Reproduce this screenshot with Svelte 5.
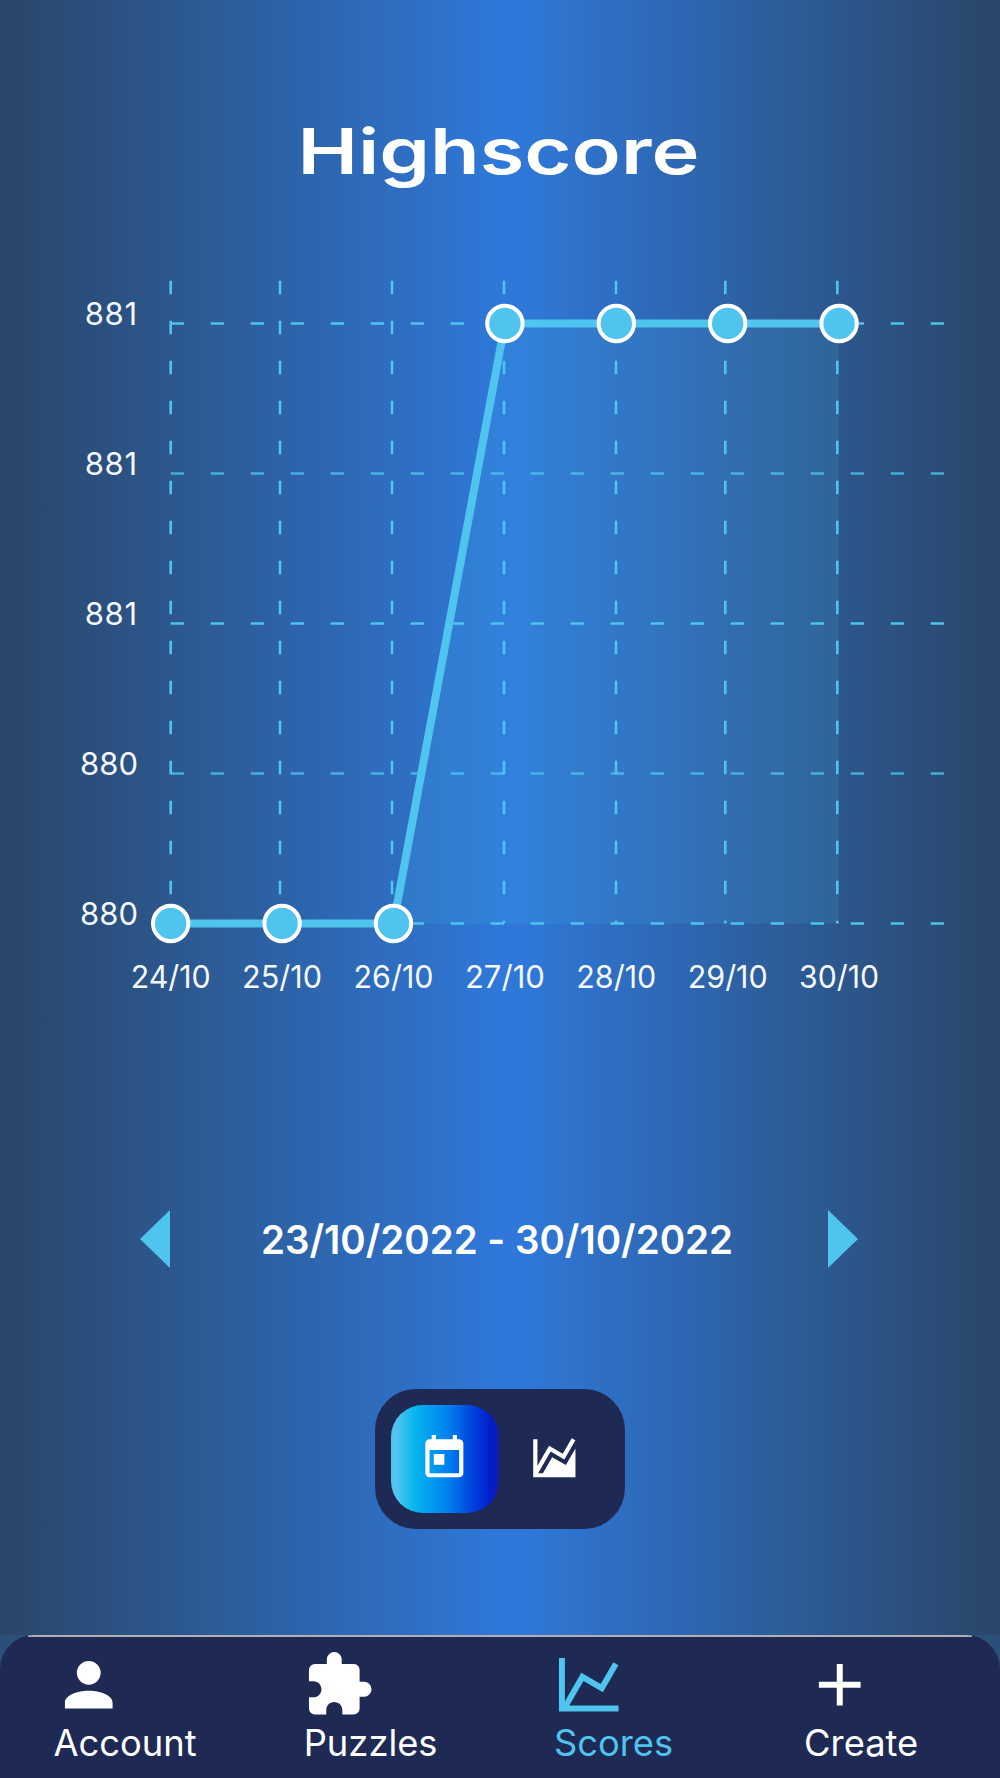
<script>
	const scores = [
		{ day: "24/10", score: 880 },
		{ day: "25/10", score: 880 },
		{ day: "26/10", score: 880 },
		{ day: "27/10", score: 881 },
		{ day: "28/10", score: 881 },
		{ day: "29/10", score: 881 },
		{ day: "30/10", score: 881 }
	];

	const tabs = [
		{
			name: "Account",
			icon: "M12,4A4,4 0 0,1 16,8A4,4 0 0,1 12,12A4,4 0 0,1 8,8A4,4 0 0,1 12,4M12,14C16.42,14 20,15.79 20,18V20H4V18C4,15.79 7.58,14 12,14Z"
		},
		{
			name: "Puzzles",
			icon: "M20.5,11H19V7C19,5.89 18.1,5 17,5H13V3.5A2.5,2.5 0 0,0 10.5,1A2.5,2.5 0 0,0 8,3.5V5H4A2,2 0 0,0 2,7V10.8H3.5C5,10.8 6.2,12 6.2,13.5C6.2,15 5,16.2 3.5,16.2H2V20A2,2 0 0,0 4,22H7.8V20.5C7.8,19 9,17.8 10.5,17.8C12,17.8 13.2,19 13.2,20.5V22H17A2,2 0 0,0 19,20V16H20.5A2.5,2.5 0 0,0 23,13.5A2.5,2.5 0 0,0 20.5,11Z"
		},
		{
			name: "Scores",
			icon: "M16,11.78L20.24,4.45L21.97,5.45L16.74,14.5L10.23,10.75L5.46,19H22V21H2V3H4V17.54L9.5,8L16,11.78Z"
		},
		{ name: "Create", icon: "M19,13H13V19H11V13H5V11H11V5H13V11H19V13Z" }
	];

	const views = [
		{
			name: "week",
			icon: "M7,10H12V15H7M19,19H5V8H19M19,3H18V1H16V3H8V1H6V3H5C3.89,3 3,3.9 3,5V19A2,2 0 0,0 5,21H19A2,2 0 0,0 21,19V5A2,2 0 0,0 19,3Z"
		},
		{
			name: "all",
			icon: "M17.45,15.18L22,7.31V19L22,21H2V3H4V15.54L9.5,6L16,9.78L20.24,2.45L21.97,3.45L16.74,12.5L10.23,8.75L4.31,19H6.57L10.96,11.44L17.45,15.18Z"
		}
	];

	// chart geometry
	const left = 170.7;
	const right = 944;
	const top = 73.5;
	const bottom = 673.5;
	const step = 111.4;
	const gridX = [170.7, 280, 392, 504, 616, 725.3, 837.3];
	const rows = [881, 881, 881, 880, 880];

	let activeTab = $state("Scores");
	let activeView = $state("week");

	const points = scores.map((s, i) => ({
		day: s.day,
		x: left + i * step,
		y: bottom - (s.score - 880) * (bottom - top)
	}));
	const line = points.map((p) => `${p.x},${p.y}`).join(" ");
	const area = `${left},${bottom} ${line} ${points[points.length - 1].x},${bottom}`;
</script>

<div class="screen">
	<h1>
		<svg width="1000" height="250">
			<text x="297.5" y="174.3" textLength="402" lengthAdjust="spacingAndGlyphs">Highscore</text>
		</svg>
	</h1>

	<svg class="chart" width="1000" height="770">
		<polygon class="area" points={area} />
		{#each rows as label, i}
			<line class="grid" x1={left} x2={right} y1={top + i * 150} y2={top + i * 150} class:soft={i === 1 || i === 3} />
			<text class:wide={label === 881} x="138" y={74.5 + i * 150} text-anchor="end">{label}</text>
		{/each}
		{#each gridX as x}
			<line class="grid" x1={x} x2={x} y1="30.8" y2={bottom} />
		{/each}
		<polyline class="line" points={line} />
		{#each points as p}
			<circle cx={p.x} cy={p.y} r="17.7" />
			<text x={p.x} y="738" textLength="80" lengthAdjust="spacingAndGlyphs" text-anchor="middle">{p.day}</text>
		{/each}
	</svg>

	<div class="period">
		<button aria-label="Previous week">
			<svg width="30" height="58"><path d="M30 0V58L0 29Z" /></svg>
		</button>
		<svg width="500" height="80">
			<text x="12" y="55.3" textLength="472" lengthAdjust="spacingAndGlyphs">23/10/2022 - 30/10/2022</text>
		</svg>
		<button aria-label="Next week">
			<svg width="30" height="58"><path d="M0 0V58L30 29Z" /></svg>
		</button>
	</div>

	<div class="toggle">
		{#each views as view}
			<button class:active={activeView === view.name} aria-label={view.name} onclick={() => (activeView = view.name)}>
				<svg viewBox="0 0 24 24"><path d={view.icon} /></svg>
			</button>
		{/each}
	</div>

	<div class="nav-wrap">
		<nav>
			{#each tabs as tab}
				<button class:active={activeTab === tab.name} onclick={() => (activeTab = tab.name)}>
					<svg viewBox="0 0 24 24"><path d={tab.icon} /></svg>
					<span>{tab.name}</span>
				</button>
			{/each}
		</nav>
	</div>
</div>

<style>
	:global(body) {
		margin: 0;
	}
	.screen {
		width: 1000px;
		height: 1778px;
		display: flex;
		flex-direction: column;
		overflow: hidden;
		font-family: Inter, "Liberation Sans", sans-serif;
		color: #fff;
		background: linear-gradient(90deg, #2a4669, #2d5f9f 25%, #2f78d9 50%, #2f78d9 52%, #2d5f9f 76%, #2a4669);
	}
	svg {
		display: block;
		overflow: visible;
		fill: currentColor;
	}
	button {
		padding: 0;
		border: 0;
		background: none;
		color: inherit;
		font: inherit;
	}
	h1 {
		margin: 0;
		font-size: 63px;
		font-weight: 570;
	}
	.chart {
		font-size: 31px;
		font-weight: 390;
		flex: none;
	}
	.chart text {
		fill: #f5f8ff;
	}
	.chart .wide {
		letter-spacing: 0.8px;
	}
	.area {
		fill: #4ec4ee;
		opacity: 0.13;
	}
	.grid {
		stroke: #4ec4ee;
		stroke-width: 2.6;
		stroke-dasharray: 13.33 26.67;
	}
	.soft {
		opacity: 0.8;
	}
	.line {
		fill: none;
		stroke: #4ec4ee;
		stroke-width: 8;
	}
	circle {
		fill: #4ec4ee;
		stroke: #fff;
		stroke-width: 4;
	}
	.period {
		display: flex;
		justify-content: space-between;
		align-items: center;
		margin: 179px 142px 0 140px;
		font-size: 40px;
		font-weight: 600;
		font-feature-settings: "calt" 0;
	}
	.period button {
		color: #4ec4ee;
	}
	.toggle {
		display: flex;
		align-self: center;
		gap: 2px;
		margin-top: 109.7px;
		padding: 16px;
		border-radius: 41px;
		background: #1f2a54;
	}
	.toggle button {
		display: grid;
		place-items: center;
		width: 108px;
		height: 108px;
		border-radius: 32px;
	}
	.toggle .active {
		background: linear-gradient(90deg, #4ec4ee 6%, #06b6ef 22%, #0082f0 52%, #0045de 74%, #001ecb 92%, #1519b4);
	}
	.toggle svg {
		width: 50.7px;
		margin-right: 1px;
	}
	.nav-wrap {
		margin-top: auto;
		background: linear-gradient(90deg, #2b4f78, #2f78d9, #2b4f78);
	}
	nav {
		display: grid;
		grid-template-columns: repeat(4, 250.2px);
		box-sizing: border-box;
		height: 143px;
		border-radius: 34px 34px 0 0;
		background: linear-gradient(#b3b0b5, #b3b0b5) 50% 0 / 944px 2px no-repeat #1f2a54;
	}
	nav button {
		display: flex;
		flex-direction: column;
		align-items: flex-start;
		padding: 14px 0 0 53.5px;
		font-size: 36.3px;
		font-weight: 390;
		line-height: 44px;
	}
	nav button.active {
		color: #4ec4ee;
	}
	nav svg {
		width: 71.5px;
		margin-left: -0.5px;
	}
</style>
